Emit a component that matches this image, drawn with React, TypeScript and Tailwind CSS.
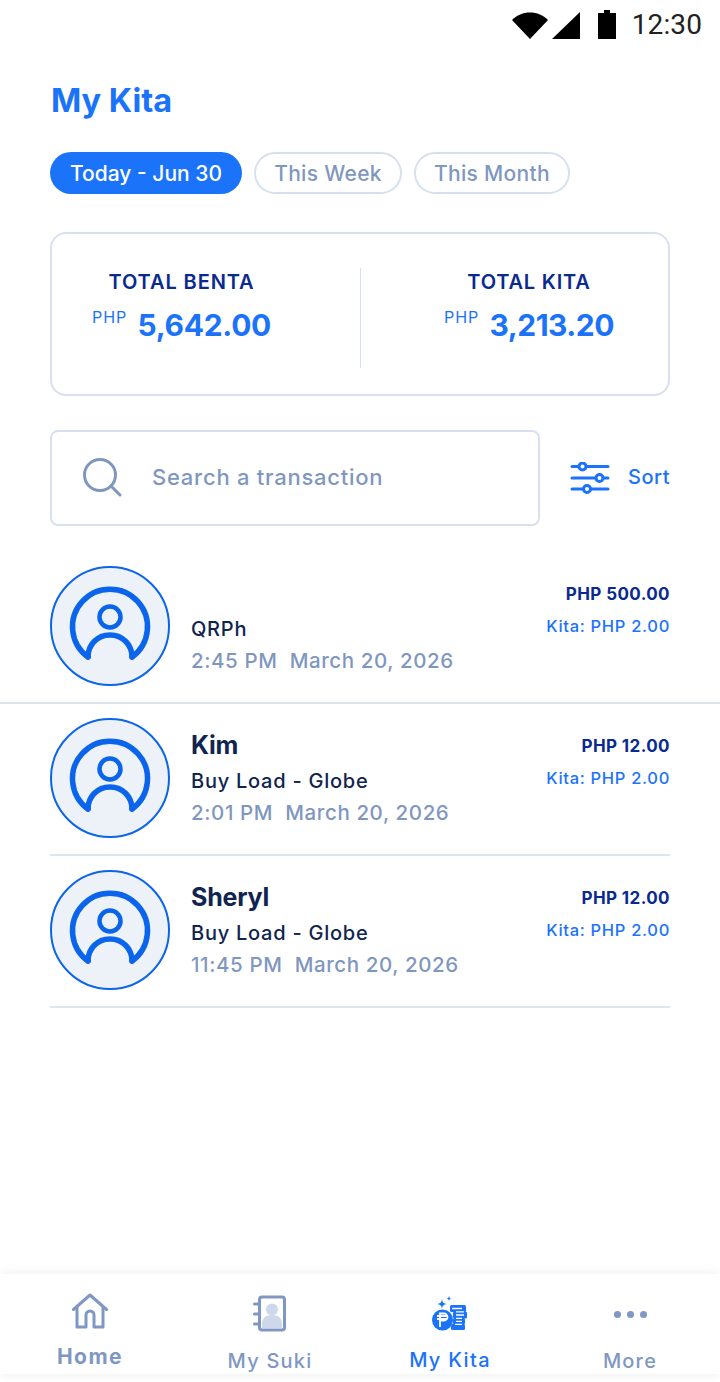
import React from 'react';

const transactions = [
  { name: '', type: 'QRPh', time: '2:45 PM', date: 'March 20, 2026', amount: 'PHP 500.00', fullLine: true },
  { name: 'Kim', type: 'Buy Load - Globe', time: '2:01 PM', date: 'March 20, 2026', amount: 'PHP 12.00', fullLine: false },
  { name: 'Sheryl', type: 'Buy Load - Globe', time: '11:45 PM', date: 'March 20, 2026', amount: 'PHP 12.00', fullLine: false },
];

const StatusBar = () => (
  <div className="h-[50px] flex items-center justify-end pr-[18px] gap-[4px]">
    <svg width="36" height="30" viewBox="0 0 36 30">
      <path d="M0 10C5 5 11 2.500 18 2.500S31 5 36 10L18 29z" fill="#000" />
    </svg>
    <svg width="28" height="30" viewBox="0 0 28 30">
      <path d="M0 29 L28 2 V29z" fill="#000" />
    </svg>
    <svg width="18" height="30" viewBox="0 0 18 30" className="ml-[14px]">
      <path d="M6 0h6v3h6v26H0V3h6z" fill="#000" />
    </svg>
    <span className="ml-[12px] text-[28px] leading-none tracking-[0.1px] text-[#212121] font-['Roboto',sans-serif]">12:30</span>
  </div>
);

const Avatar = () => (
  <div className="w-[120px] h-[120px] shrink-0 rounded-full border-2 border-[#0a64ec] bg-[#edf2f9] flex items-center justify-center">
    <svg width="80" height="76" viewBox="0 0 80 76" fill="none" stroke="#0a64ec" strokeLinecap="round" strokeLinejoin="round" strokeWidth="5.500" className="overflow-visible">
      <path d="M18 69A37.500 37.500 0 1 1 62 69" />
      <path d="M18 69c0-12 9-22 22-22s22 10 22 22" />
      <circle cx="40" cy="29" r="10.500" strokeWidth="4.500" />
    </svg>
  </div>
);

const TransactionRow = ({ t }: { t: (typeof transactions)[number] }) => (
  <div className={t.fullLine ? 'h-[152px] border-b-2 border-[#dbe3ef] px-[50px] pt-[14px]' : 'h-[152px] mx-[50px] border-b-2 border-[#dfe5ee] pt-[14px]'}>
    <div className="flex">
      <Avatar />
      <div className="ml-[21px] flex-1 pt-[11px]">
        <div className="h-[32px] text-[25px] leading-[32px] font-bold tracking-[-0.2px] text-[#0f2450]">{t.name}</div>
        <div className="mt-[4px] text-[20px] leading-[32px] font-medium tracking-[0.75px] text-[#0f2450]">{t.type}</div>
        <div className="text-[20.500px] leading-[32px] font-medium tracking-[0.6px] text-[#7f97bf] whitespace-pre">{t.time}{'  '}{t.date}</div>
      </div>
      <div className="text-right pt-[12px]">
        <div className="text-[17px] leading-[32px] font-bold tracking-[0.4px] text-[#0a2a8f]">{t.amount}</div>
        <div className="text-[16.500px] leading-[32px] font-medium tracking-[0.7px] text-[#1a73f8]">Kita: PHP 2.00</div>
      </div>
    </div>
  </div>
);

const HomeIcon = () => (
  <svg width="36" height="36" viewBox="0 0 36 36" fill="none" stroke="#7f97c2" strokeWidth="3" strokeLinejoin="round" strokeLinecap="round">
    <path d="M1.500 16.500 18 2l16.500 14.500" />
    <path d="M5 14v20h9V22a4 4 0 0 1 8 0v12h9V14" />
  </svg>
);

const SukiIcon = () => (
  <svg width="34" height="38" viewBox="0 0 34 38">
    <rect x="6.500" y="2" width="25" height="33" rx="2.500" fill="#fff" stroke="#7f97c2" strokeWidth="3" />
    <circle cx="19" cy="14.500" r="6" fill="#cdd8ea" />
    <path d="M9 33v-4c0-6 4-9 10-9s10 3 10 9v4z" fill="#cdd8ea" />
    <path d="M1.500 9h5M1.500 19h5M1.500 29h5" stroke="#7f97c2" strokeWidth="3" strokeLinecap="round" />
  </svg>
);

const KitaIcon = () => (
  <svg width="36" height="36" viewBox="0 0 36 36">
    <path d="M10 3c.5 3.500 1.500 4.500 5 5-3.500.5-4.500 1.500-5 5-.5-3.500-1.500-4.500-5-5 3.500-.5 4.500-1.500 5-5z" fill="#1a73f8" />
    <path d="M17 0c.3 1.700.8 2.200 2.500 2.500-1.700.3-2.200.8-2.500 2.500-.3-1.700-.8-2.200-2.500-2.500 1.700-.3 2.200-.8 2.500-2.500z" fill="#1a73f8" />
    <rect x="18" y="9" width="16" height="7" rx="1.500" fill="#1a73f8" />
    <rect x="21" y="15.500" width="14" height="7" rx="1.500" fill="#1a73f8" />
    <rect x="21" y="22" width="12" height="6.500" rx="1.500" fill="#1a73f8" />
    <rect x="19" y="28" width="14" height="6" rx="1.500" fill="#1a73f8" />
    <path d="M20 12.500h10M24 15.800h8M24 19h8M24 22.300h6M24 25.300h6M23 28.300h7" stroke="#fff" strokeWidth="1.300" />
    <circle cx="10.500" cy="24" r="10.500" fill="#1a73f8" />
    <path d="M8 31V17.500h4a3.500 3.500 0 0 1 0 7H8M5 20h10.500M5 23h10.500" fill="none" stroke="#fff" strokeWidth="1.800" />
  </svg>
);

const navItems = [
  { label: 'Home', icon: <HomeIcon />, labelCls: 'mt-[11px] text-[21px] text-[#7f97c2] font-bold tracking-[1.5px]', height: 'h-[42px]' },
  { label: 'My Suki', icon: <SukiIcon />, labelCls: 'mt-[9px] text-[20px] text-[#7f97c2] font-medium tracking-[1.2px]', height: 'h-[48px]' },
  { label: 'My Kita', icon: <KitaIcon />, labelCls: 'mt-[8px] text-[20px] text-[#1a73f8] font-medium tracking-[1.300px]', height: 'h-[48px]' },
  {
    label: 'More',
    icon: (
      <div className="flex gap-[6px]">
        <span className="w-[7px] h-[7px] rounded-full bg-[#7f97c2]" />
        <span className="w-[7px] h-[7px] rounded-full bg-[#7f97c2]" />
        <span className="w-[7px] h-[7px] rounded-full bg-[#7f97c2]" />
      </div>
    ),
    labelCls: 'mt-[9px] text-[20px] text-[#7f97c2] font-medium tracking-[1.2px]',
    height: 'h-[48px]',
  },
];

export default function App() {
  return (
    <div className="w-[720px] h-[1382px] bg-white flex flex-col font-['Inter',sans-serif] overflow-hidden">
      <StatusBar />

      <h1 className="mt-[31px] ml-[51px] text-[32.500px] leading-[40px] font-bold text-[#1a73f8]">My Kita</h1>

      <div className="mt-[31px] mx-[50px] flex gap-[12px]">
        <div className="w-[192px] h-[42px] pt-px rounded-full bg-[#1a73f8] text-white text-[21px] font-medium flex items-center justify-center">Today - Jun 30</div>
        <div className="w-[148px] h-[42px] pt-px rounded-full border-2 border-[#d6e0ef] text-[#7f97bf] text-[21px] font-medium tracking-[0.3px] flex items-center justify-center">This Week</div>
        <div className="w-[156px] h-[42px] pt-px rounded-full border-2 border-[#d6e0ef] text-[#7f97bf] text-[21px] font-medium tracking-[0.3px] flex items-center justify-center">This Month</div>
      </div>

      <div className="mt-[38px] mx-[50px] h-[164px] rounded-2xl border-2 border-[#d6e0ef] flex pt-[34px]">
        <div className="ml-[40px] w-[179px] h-[100px] flex flex-col items-center">
          <div className="text-[20px] leading-[28px] font-semibold tracking-[0.9px] text-[#0a2a8f]">TOTAL BENTA</div>
          <div className="flex items-start mt-[9px] w-full justify-between">
            <span className="mt-[2px] text-[16px] leading-[20px] tracking-[1px] text-[#1a73f8]">PHP</span>
            <span className="text-[30px] leading-[40px] font-bold tracking-[-0.3px] text-[#1a73f8]">5,642.00</span>
          </div>
        </div>
        <div className="ml-[89px] w-px h-[100px] bg-[#d6e0ef]" />
        <div className="ml-[83px] w-[170px] h-[100px] flex flex-col items-center">
          <div className="text-[20px] leading-[28px] font-semibold tracking-[0.8px] text-[#0a2a8f]">TOTAL KITA</div>
          <div className="flex items-start mt-[9px] w-full justify-between">
            <span className="mt-[2px] text-[16px] leading-[20px] tracking-[1px] text-[#1a73f8]">PHP</span>
            <span className="text-[30px] leading-[40px] font-bold tracking-[-0.5px] text-[#1a73f8]">3,213.20</span>
          </div>
        </div>
      </div>

      <div className="mt-[34px] mx-[50px] flex items-center">
        <div className="w-[490px] h-[96px] rounded-lg border-2 border-[#d6e0ef] flex items-center pl-[31px]">
          <svg width="40" height="40" viewBox="0 0 40 40" fill="none" stroke="#7f97bf" strokeWidth="3" strokeLinecap="round">
            <circle cx="17" cy="17" r="15.500" />
            <path d="M28 28l9 9" />
          </svg>
          <span className="ml-[29px] mb-[2px] text-[22px] font-medium tracking-[0.75px] text-[#7f97bf]">Search a transaction</span>
        </div>
        <svg width="40" height="32" viewBox="0 0 40 32" fill="none" stroke="#1a73f8" strokeWidth="3" strokeLinecap="round" className="ml-[30px]">
          <path d="M2 4.500h6.500M17 4.500h21M2 16h23M34 16h4M2 27h11M21 27h17" />
          <circle cx="12.500" cy="4.500" r="3.500" />
          <circle cx="29.500" cy="16" r="3.500" />
          <circle cx="17" cy="27" r="3.500" />
        </svg>
        <span className="ml-auto mb-[2px] text-[20px] font-medium tracking-[0.5px] text-[#1a73f8]">Sort</span>
      </div>

      <div className="mt-[26px]">
        {transactions.map((t, i) => (
          <TransactionRow key={i} t={t} />
        ))}
      </div>

      <div className="flex-1" />

      <div className="mb-[8px] h-[100px] bg-white shadow-[0_0_12px_rgba(0,0,0,0.08)] grid grid-cols-4">
        {navItems.map(item => (
          <div key={item.label} className="flex flex-col items-center pt-[16px]">
            <div className={`${item.height} flex items-center justify-center`}>{item.icon}</div>
            <div className={`leading-[28px] ${item.labelCls}`}>{item.label}</div>
          </div>
        ))}
      </div>
    </div>
  );
}
